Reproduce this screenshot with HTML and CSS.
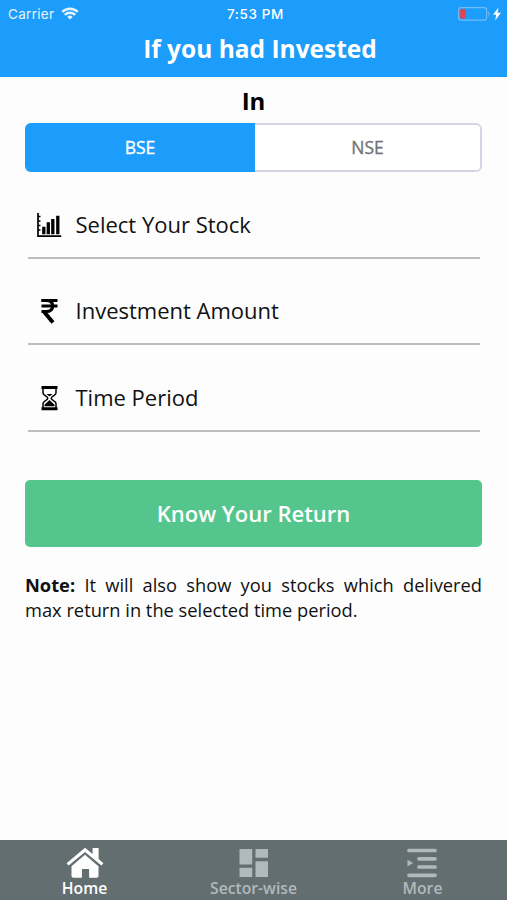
FILE: index.html
```html
<!DOCTYPE html>
<html lang="en">
<head>
<meta charset="utf-8">
<title>If you had Invested</title>
<link rel="stylesheet" href="styles.css">
</head>
<body>
<div class="screen">
  <header class="header">
    <div class="status">
      <div class="status-left"><span class="carrier">Carrier</span>
        <svg class="wifi" width="18" height="13" viewBox="0 0 18 13" fill="none" stroke="currentColor" stroke-width="2.4"><path d="M1.2 4.9a11.2 11.2 0 0 1 15.6 0"/><path d="M3.8 7.9a7.5 7.5 0 0 1 10.4 0"/><path d="M9 12.6 6.3 9.9a3.9 3.9 0 0 1 5.4 0Z" fill="currentColor" stroke="none"/></svg>
      </div>
      <div class="clock">7:53 PM</div>
      <div class="status-right">
        <svg width="44" height="14" viewBox="0 0 44 14"><rect x=".6" y=".6" width="28" height="12.6" rx="2.4" fill="none" stroke="#72bdf8" stroke-width="1.2"/><rect x="2.2" y="2.2" width="5.6" height="9.4" rx="1" fill="#e4434b"/><path d="M30.2 4.3q2.400 2.500 0 5z" fill="#72bdf8"/><path d="M40.500.600 35 7.800h3.200l-1 5.600 5.700-7.600h-3.400z" fill="#fff"/></svg>
      </div>
    </div>
    <h1 class="title">If you had Invested</h1>
  </header>
  <main class="content">
    <h2 class="subtitle">In</h2>
    <div class="segments"><button class="segment active">BSE</button><button class="segment">NSE</button></div>
    <div class="field">
      <svg class="field-icon" width="28" height="28" viewBox="0 0 28 28"><path d="M3 2v23.200h23.200" fill="none" stroke="#000" stroke-width="1.700"/><path d="M3 5.500h2.500M3 10h2.500M3 14.500h2.500M3 19h2.500" stroke="#000" stroke-width="1.300"/><path d="M8.800 23.200v-7.400M13.300 23.200V11.200M17.800 23.200V8M22.800 23.200V4.800" stroke="#000" stroke-width="3.300"/></svg>
      <span class="field-label">Select Your Stock</span>
    </div>
    <div class="field">
      <svg class="field-icon" width="28" height="28" viewBox="0 0 28 28" fill="none" stroke="#000" stroke-width="3"><path d="M6.500 3.500H22.500M6.500 9H22.500"/><path d="M6.500 3.500H11c4.500 0 6.700 2.200 6.700 5.500 0 3.700-2.600 5.600-6.700 5.600H6.500" stroke-width="3"/><path d="M9.200 15 18 25.500" stroke-width="3.900"/></svg>
      <span class="field-label">Investment Amount</span>
    </div>
    <div class="field">
      <svg class="field-icon" width="28" height="28" viewBox="0 0 28 28"><path d="M8 4v5c0 2.400 4.800 3.100 4.800 5.200S8 17 8 19.500V25M21 4v5c0 2.400-4.800 3.100-4.800 5.200S21 17 21 19.500V25" fill="none" stroke="#000" stroke-width="1.500"/><path d="M6.500 3.500h16M6.500 24.700h16" stroke="#000" stroke-width="3"/><path d="M11.500 10h6L14.500 12.600zM14.500 16l5 4.800v1.500h-10v-1.500z"/></svg>
      <span class="field-label">Time Period</span>
    </div>
    <button class="submit">Know Your Return</button>
    <p class="note"><span class="note-line justified"><b>Note:</b> It will also show you stocks which delivered</span> <span class="note-line">max return in the selected time period.</span></p>
  </main>
  <nav class="tabs">
    <a class="tab current"><svg width="38" height="32" viewBox="0 0 38 32" fill="currentColor"><path d="M5.500 19.200 19 7.800l13.500 11.400V29q0 1.800-1.800 1.800h-7.600v-8.700h-7.200v8.700H7.300Q5.500 30.800 5.500 29z"/><path d="M.6 16.200 19 .8l7.600 6.300V1h6v11.100l4.800 4.100-2 2.300L19 4.900 2.600 18.500z"/></svg><span class="tab-label">Home</span></a>
    <a class="tab"><svg width="38" height="32" viewBox="0 0 38 32" fill="currentColor"><path d="M4.500 2h12.700v15.500H4.500zM20.500 2H33v8.700H20.500zM4.500 20.700h12.700V30H4.500zM20.500 14.300H33V30H20.500z"/></svg><span class="tab-label">Sector-wise</span></a>
    <a class="tab"><svg width="38" height="32" viewBox="0 0 38 32"><path d="M5 3.500H31M15 11.800H31M15 20H31M5 28.300H31" stroke="currentColor" stroke-width="3.700" stroke-linecap="round"/><path d="M3.500 12.700 9.200 16 3.500 19.300z" fill="currentColor"/></svg><span class="tab-label">More</span></a>
  </nav>
</div>
</body>
</html>
```
FILE: styles.css
```css
* { box-sizing: border-box; }
body { margin: 0; font-family: "Open Sans", "Noto Sans", sans-serif; background: #fdfdfd; color: #111; }
button { font-family: inherit; border: 0; padding: 0; margin: 0; }
svg { display: block; flex: none; }
.screen { width: 507px; height: 900px; display: flex; flex-direction: column; overflow: hidden; }
.header { height: 77px; flex: none; background: #1c9cfb; color: #fff; }
.status { height: 27px; display: grid; grid-template-columns: 1fr auto 1fr; align-items: center; padding: 0 5px 0 8px; font-family: Inter, sans-serif; font-size: 13.500px; }
.status-left { display: flex; align-items: center; gap: 7px; color: #e5f4ff; }
.carrier { letter-spacing: .3px; }
.clock { font-weight: 500; letter-spacing: .6px; padding-left: 1px; }
.status-right { display: flex; justify-content: flex-end; }
.title { margin: 5px 0 0; padding-left: 13px; text-align: center; font-size: 24.500px; line-height: 34px; font-weight: 700; }
.content { flex: 1; padding: 0 25px; }
.subtitle { margin: 7px 0 5px; text-align: center; font-size: 24px; line-height: 34px; font-weight: 700; color: #000; }
.segments { height: 49px; display: flex; border: 2px solid #d5d4e4; border-left: 0; border-radius: 6px; background: #fff; }
.segment { flex: 1; border-radius: 0 4px 4px 0; background: #fff; color: #747474; font-size: 17.500px; line-height: 24px; padding-bottom: 1px; -webkit-text-stroke: .35px currentColor; }
.segment.active { flex: 0 0 230px; background: #1c9cfb; color: #fff; margin: -2px 0; border-radius: 6px 0 0 6px; }
.field { height: 86.500px; margin: 0 2px 0 3px; display: flex; align-items: flex-end; padding-bottom: 18px; border-bottom: 2px solid #bdbdbd; }
.field-icon { margin: 0 12px 0 7px; }
.field-label { font-size: 22px; line-height: 30px; padding-left: .5px; }
.submit { display: block; width: 100%; height: 67px; margin-top: 48.500px; padding-bottom: 1px; border-radius: 5px; background: #55c58e; color: #fff; font-size: 22px; font-weight: 600; }
.note { margin: 24.500px 0 0; font-size: 18.300px; line-height: 25px; }
.note-line { display: block; white-space: nowrap; }
.justified { white-space: normal; text-align: justify; text-align-last: justify; }
.tabs { height: 60px; flex: none; display: grid; grid-template-columns: repeat(3, 1fr); background: #636e70; }
.tab { display: flex; flex-direction: column; align-items: center; padding-top: 7px; color: #b1b9bc; font-size: 15.700px; font-weight: 600; }
.tab-label { line-height: 18px; }
.tab.current { color: #fff; }
```
